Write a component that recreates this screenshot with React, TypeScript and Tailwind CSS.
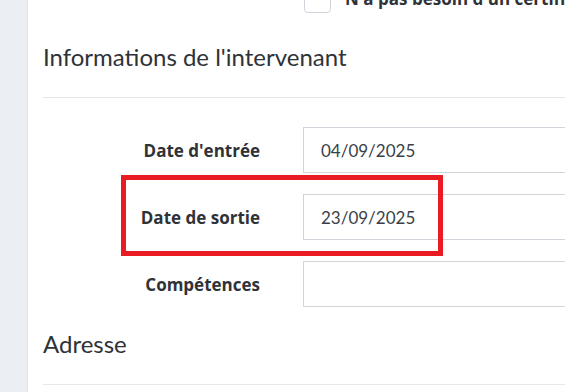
import React from "react";

const font = { fontFamily: "Lato, 'Noto Sans', sans-serif" };
const bold = { fontFamily: "'Open Sans', 'Noto Sans', sans-serif" };

function Row({ label, value }: { label: string; value?: string }) {
  return (
    <div className="flex items-center h-[46px] w-[900px]">
      <div className="w-[217px] shrink-0 text-right text-[17px] font-bold text-[#2f3237] leading-none" style={bold}>
        {label}
      </div>
      <div className="ml-[43px] shrink-0 w-[600px] h-[46px] border border-[#cfd4db] bg-white flex items-center pl-[17px] text-[17px] text-[#3a3f47] leading-none">
        {value}
      </div>
    </div>
  );
}

export default function App() {
  return (
    <div className="w-[565px] h-[392px] overflow-hidden flex bg-white" style={font}>
      <div className="w-[28px] shrink-0 bg-[#ebeef3] border-r border-[#e1e5eb]" />
      <div className="relative flex-1 pl-[15px] min-w-0">
        <div className="flex items-center mt-[-14px] ml-[261px] h-[27px]">
          <div className="w-[27px] h-[27px] shrink-0 rounded-[4px] border border-[#cfd4db] bg-white" />
          <div
            className="ml-[14px] whitespace-nowrap text-[17px] font-bold text-[#2f3237] leading-none mt-[-2px]"
            style={bold}
          >
            N'a pas besoin d'un certificat médical
          </div>
        </div>
        <h2 className="mt-[29px] text-[24px] leading-[30px] font-normal text-[#2f3237] whitespace-nowrap">
          Informations de l'intervenant
        </h2>
        <div className="mt-[25px] h-px bg-[#e6e8eb] w-[800px]" />
        <div className="mt-[29px] flex flex-col gap-[21px]">
          <Row label="Date d'entrée" value="04/09/2025" />
          <Row label="Date de sortie" value="23/09/2025" />
          <Row label="Compétences" />
        </div>
        <h2 className="mt-[22px] text-[24px] leading-[30px] font-normal text-[#2f3237] whitespace-nowrap">
          Adresse
        </h2>
        <div className="mt-[25px] h-px bg-[#e6e8eb] w-[800px]" />
        <div className="absolute left-[93px] top-[175px] w-[322px] h-[81px] border-[5px] border-[#e81c22]" />
      </div>
    </div>
  );
}
